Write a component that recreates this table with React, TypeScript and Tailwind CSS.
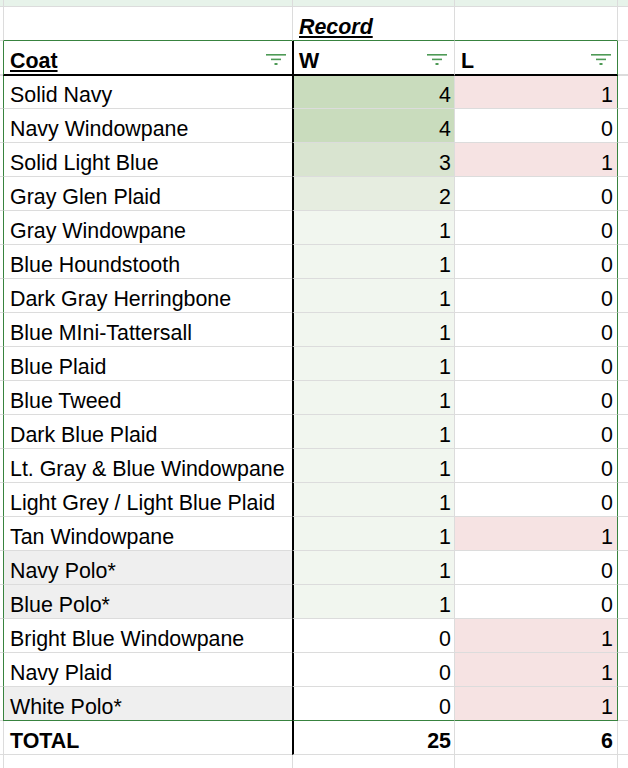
import React from "react";

type Item = { name: string; w: number; l: number; gray?: boolean };

const data: Item[] = [
  { name: "Solid Navy", w: 4, l: 1 },
  { name: "Navy Windowpane", w: 4, l: 0 },
  { name: "Solid Light Blue", w: 3, l: 1 },
  { name: "Gray Glen Plaid", w: 2, l: 0 },
  { name: "Gray Windowpane", w: 1, l: 0 },
  { name: "Blue Houndstooth", w: 1, l: 0 },
  { name: "Dark Gray Herringbone", w: 1, l: 0 },
  { name: "Blue MIni-Tattersall", w: 1, l: 0 },
  { name: "Blue Plaid", w: 1, l: 0 },
  { name: "Blue Tweed", w: 1, l: 0 },
  { name: "Dark Blue Plaid", w: 1, l: 0 },
  { name: "Lt. Gray & Blue Windowpane", w: 1, l: 0 },
  { name: "Light Grey / Light Blue Plaid", w: 1, l: 0 },
  { name: "Tan Windowpane", w: 1, l: 1 },
  { name: "Navy Polo*", w: 1, l: 0, gray: true },
  { name: "Blue Polo*", w: 1, l: 0, gray: true },
  { name: "Bright Blue Windowpane", w: 0, l: 1 },
  { name: "Navy Plaid", w: 0, l: 1 },
  { name: "White Polo*", w: 0, l: 1, gray: true },
];

const wBg: Record<number, string> = {
  4: "bg-[#c9dcbd]",
  3: "bg-[#d9e4d0]",
  2: "bg-[#e6ede0]",
  1: "bg-[#f1f6ef]",
  0: "bg-white",
};
const lBg: Record<number, string> = {
  1: "bg-[#f6e3e3]",
  0: "bg-white",
};

function FilterIcon() {
  return (
    <svg width="20" height="11" viewBox="0 0 20 11" className="shrink-0 mt-[13px]">
      <rect x="0" y="0" width="20" height="1.6" fill="#4e9a56" />
      <rect x="5" y="4.6" width="10" height="1.6" fill="#4e9a56" />
      <rect x="8.5" y="9" width="3" height="2" fill="#4e9a56" />
    </svg>
  );
}

export default function App() {
  return (
    <div className="w-[628px] h-[768px] overflow-hidden bg-white font-['Liberation_Sans',Arial,sans-serif] text-[21.4px] leading-[24px] text-black">
      {/* top partial row */}
      <div className="flex h-[7px] bg-[#e7f3ea]">
        <div className="w-[3px] border-b border-[#dcdcdc]" />
        <div className="w-[289px] border-b border-l border-[#dcdcdc]" />
        <div className="w-[162px] border-b border-l border-[#dcdcdc]" />
        <div className="w-[164px] border-b border-l border-r border-[#dcdcdc]" />
        <div className="w-[10px] border-b border-[#dcdcdc]" />
      </div>

      {/* Record row */}
      <div className="flex h-[34px]">
        <div className="w-[3px] border-b border-[#dcdcdc]" />
        <div className="w-[289px] border-b border-l border-l-[#dcdcdc] border-b-[#38833f]" />
        <div className="w-[162px] border-b border-l border-l-[#dcdcdc] border-b-[#38833f] flex items-end pl-[6px] pb-[1px]">
          <span className="font-bold italic underline decoration-[2px] underline-offset-[2px]">Record</span>
        </div>
        <div className="w-[164px] border-b border-l border-r border-l-[#dcdcdc] border-r-[#dcdcdc] border-b-[#38833f]" />
        <div className="w-[10px] border-b border-[#dcdcdc]" />
      </div>

      {/* Header row */}
      <div className="flex h-[35px]">
        <div className="w-[3px] border-b-2 border-[#dcdcdc]" />
        <div className="w-[289px] border-b-2 border-l border-l-[#38833f] border-b-black flex justify-between pl-[6px] pr-[6px]">
          <span className="self-end pb-[1px] font-bold underline decoration-[2px] underline-offset-[2px]">Coat</span>
          <FilterIcon />
        </div>
        <div className="w-[162px] border-b-2 border-l-2 border-black flex justify-between pl-[5px] pr-[7px]">
          <span className="self-end pb-[1px] font-bold">W</span>
          <FilterIcon />
        </div>
        <div className="w-[164px] border-b-2 border-l border-r border-l-[#dcdcdc] border-r-[#38833f] border-b-black flex justify-between pl-[6px] pr-[6px]">
          <span className="self-end pb-[1px] font-bold">L</span>
          <FilterIcon />
        </div>
        <div className="w-[10px] border-b-2 border-[#dcdcdc]" />
      </div>

      {/* Data rows */}
      {data.map((d, i) => {
        const last = i === data.length - 1;
        const h = i === 0 ? "h-[33px]" : "h-[34px]";
        const bottom = last ? "border-b-[#38833f]" : "border-b-[#dcdcdc]";
        return (
          <div key={d.name} className={`flex ${h}`}>
            <div className="w-[3px] border-b border-[#dcdcdc]" />
            <div
              className={`w-[289px] border-b border-l border-l-[#38833f] ${bottom} ${
                d.gray ? "bg-[#efefef]" : "bg-white"
              } flex items-end pl-[6px] pb-[1px]`}
            >
              <span className="whitespace-nowrap">{d.name}</span>
            </div>
            <div
              className={`w-[162px] border-b border-l-2 border-l-black ${bottom} ${wBg[d.w]} flex items-end justify-end pr-[3px] pb-[1px]`}
            >
              <span>{d.w}</span>
            </div>
            <div
              className={`w-[164px] border-b border-l border-r border-l-[#dcdcdc] border-r-[#38833f] ${bottom} ${lBg[d.l]} flex items-end justify-end pr-[4px] pb-[1px]`}
            >
              <span>{d.l}</span>
            </div>
            <div className="w-[10px] border-b border-[#dcdcdc]" />
          </div>
        );
      })}

      {/* TOTAL row */}
      <div className="flex h-[34px] font-bold">
        <div className="w-[3px] border-b border-[#dcdcdc]" />
        <div className="w-[289px] border-b border-l border-[#dcdcdc] flex items-end pl-[6px] pb-[1px]">
          <span>TOTAL</span>
        </div>
        <div className="w-[162px] border-b border-l-2 border-l-black border-b-[#dcdcdc] flex items-end justify-end pr-[3px] pb-[1px]">
          <span>25</span>
        </div>
        <div className="w-[164px] border-b border-l border-r border-[#dcdcdc] flex items-end justify-end pr-[4px] pb-[1px]">
          <span>6</span>
        </div>
        <div className="w-[10px] border-b border-[#dcdcdc]" />
      </div>

      {/* trailing row */}
      <div className="flex h-[34px]">
        <div className="w-[3px]" />
        <div className="w-[289px] border-l border-[#dcdcdc]" />
        <div className="w-[162px] border-l border-[#dcdcdc]" />
        <div className="w-[164px] border-l border-r border-[#dcdcdc]" />
        <div className="w-[10px]" />
      </div>
    </div>
  );
}
